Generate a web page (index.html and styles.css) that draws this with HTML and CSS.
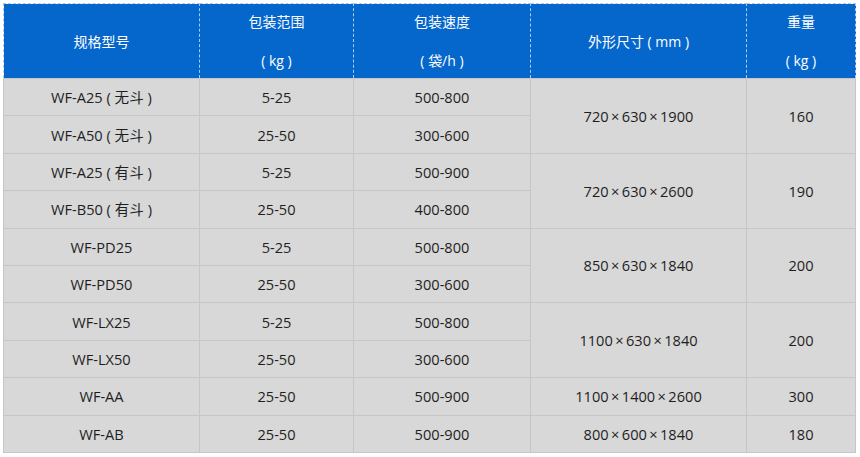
FILE: index.html
```html
<!DOCTYPE html>
<html>
<head>
<meta charset="utf-8">
<link rel="stylesheet" href="styles.css">
</head>
<body>
<table class="spec">
  <colgroup>
    <col class="c1"><col class="c2"><col class="c3"><col class="c4"><col class="c5">
  </colgroup>
  <thead>
    <tr>
      <th>规格型号</th>
      <th><div class="two"><span>包装范围</span><span>( kg )</span></div></th>
      <th><div class="two"><span>包装速度</span><span>( 袋/h )</span></div></th>
      <th>外形尺寸 ( mm )</th>
      <th><div class="two"><span>重量</span><span>( kg )</span></div></th>
    </tr>
  </thead>
  <tbody>
    <tr><td>WF-A25 ( 无斗 )</td><td>5-25</td><td>500-800</td><td rowspan="2">720&thinsp;×&thinsp;630&thinsp;×&thinsp;1900</td><td rowspan="2">160</td></tr>
    <tr><td>WF-A50 ( 无斗 )</td><td>25-50</td><td>300-600</td></tr>
    <tr><td>WF-A25 ( 有斗 )</td><td>5-25</td><td>500-900</td><td rowspan="2">720&thinsp;×&thinsp;630&thinsp;×&thinsp;2600</td><td rowspan="2">190</td></tr>
    <tr><td>WF-B50 ( 有斗 )</td><td>25-50</td><td>400-800</td></tr>
    <tr><td>WF-PD25</td><td>5-25</td><td>500-800</td><td rowspan="2">850&thinsp;×&thinsp;630&thinsp;×&thinsp;1840</td><td rowspan="2">200</td></tr>
    <tr><td>WF-PD50</td><td>25-50</td><td>300-600</td></tr>
    <tr><td>WF-LX25</td><td>5-25</td><td>500-800</td><td rowspan="2">1100&thinsp;×&thinsp;630&thinsp;×&thinsp;1840</td><td rowspan="2">200</td></tr>
    <tr><td>WF-LX50</td><td>25-50</td><td>300-600</td></tr>
    <tr><td>WF-AA</td><td>25-50</td><td>500-900</td><td>1100&thinsp;×&thinsp;1400&thinsp;×&thinsp;2600</td><td>300</td></tr>
    <tr><td>WF-AB</td><td>25-50</td><td>500-900</td><td>800&thinsp;×&thinsp;600&thinsp;×&thinsp;1840</td><td>180</td></tr>
  </tbody>
</table>
</body>
</html>
```
FILE: styles.css
```css
html, body {
  margin: 0;
  padding: 0;
  background: #ffffff;
}
body {
  padding: 3px 0 0 3px;
  font-family: "Open Sans", "Noto Sans CJK SC", sans-serif;
}
.spec {
  border-collapse: collapse;
  table-layout: fixed;
  width: 852px;
}
.c1 { width: 196px; }
.c2 { width: 154px; }
.c3 { width: 177px; }
.c4 { width: 216px; }
.c5 { width: 109px; }
.spec th {
  background: #0567cc;
  color: #ffffff;
  font-family: "Open Sans", "Noto Sans CJK SC", sans-serif;
  font-weight: normal;
  font-size: 14px;
  height: 74px;
  padding: 0;
  border: 1px dashed #a9cbee;
  text-align: center;
  vertical-align: middle;
  white-space: pre;
}
.two {
  display: flex;
  flex-direction: column;
  align-items: center;
  gap: 19px;
  line-height: 20px;
}
.spec td {
  background: #d8d8d8;
  color: #1e1e1e;
  font-size: 14.6px;
  line-height: 20px;
  height: 36.4px;
  padding: 0;
  border: 1px solid #c6c6c6;
  text-align: center;
  vertical-align: middle;
  white-space: pre;
}
```
